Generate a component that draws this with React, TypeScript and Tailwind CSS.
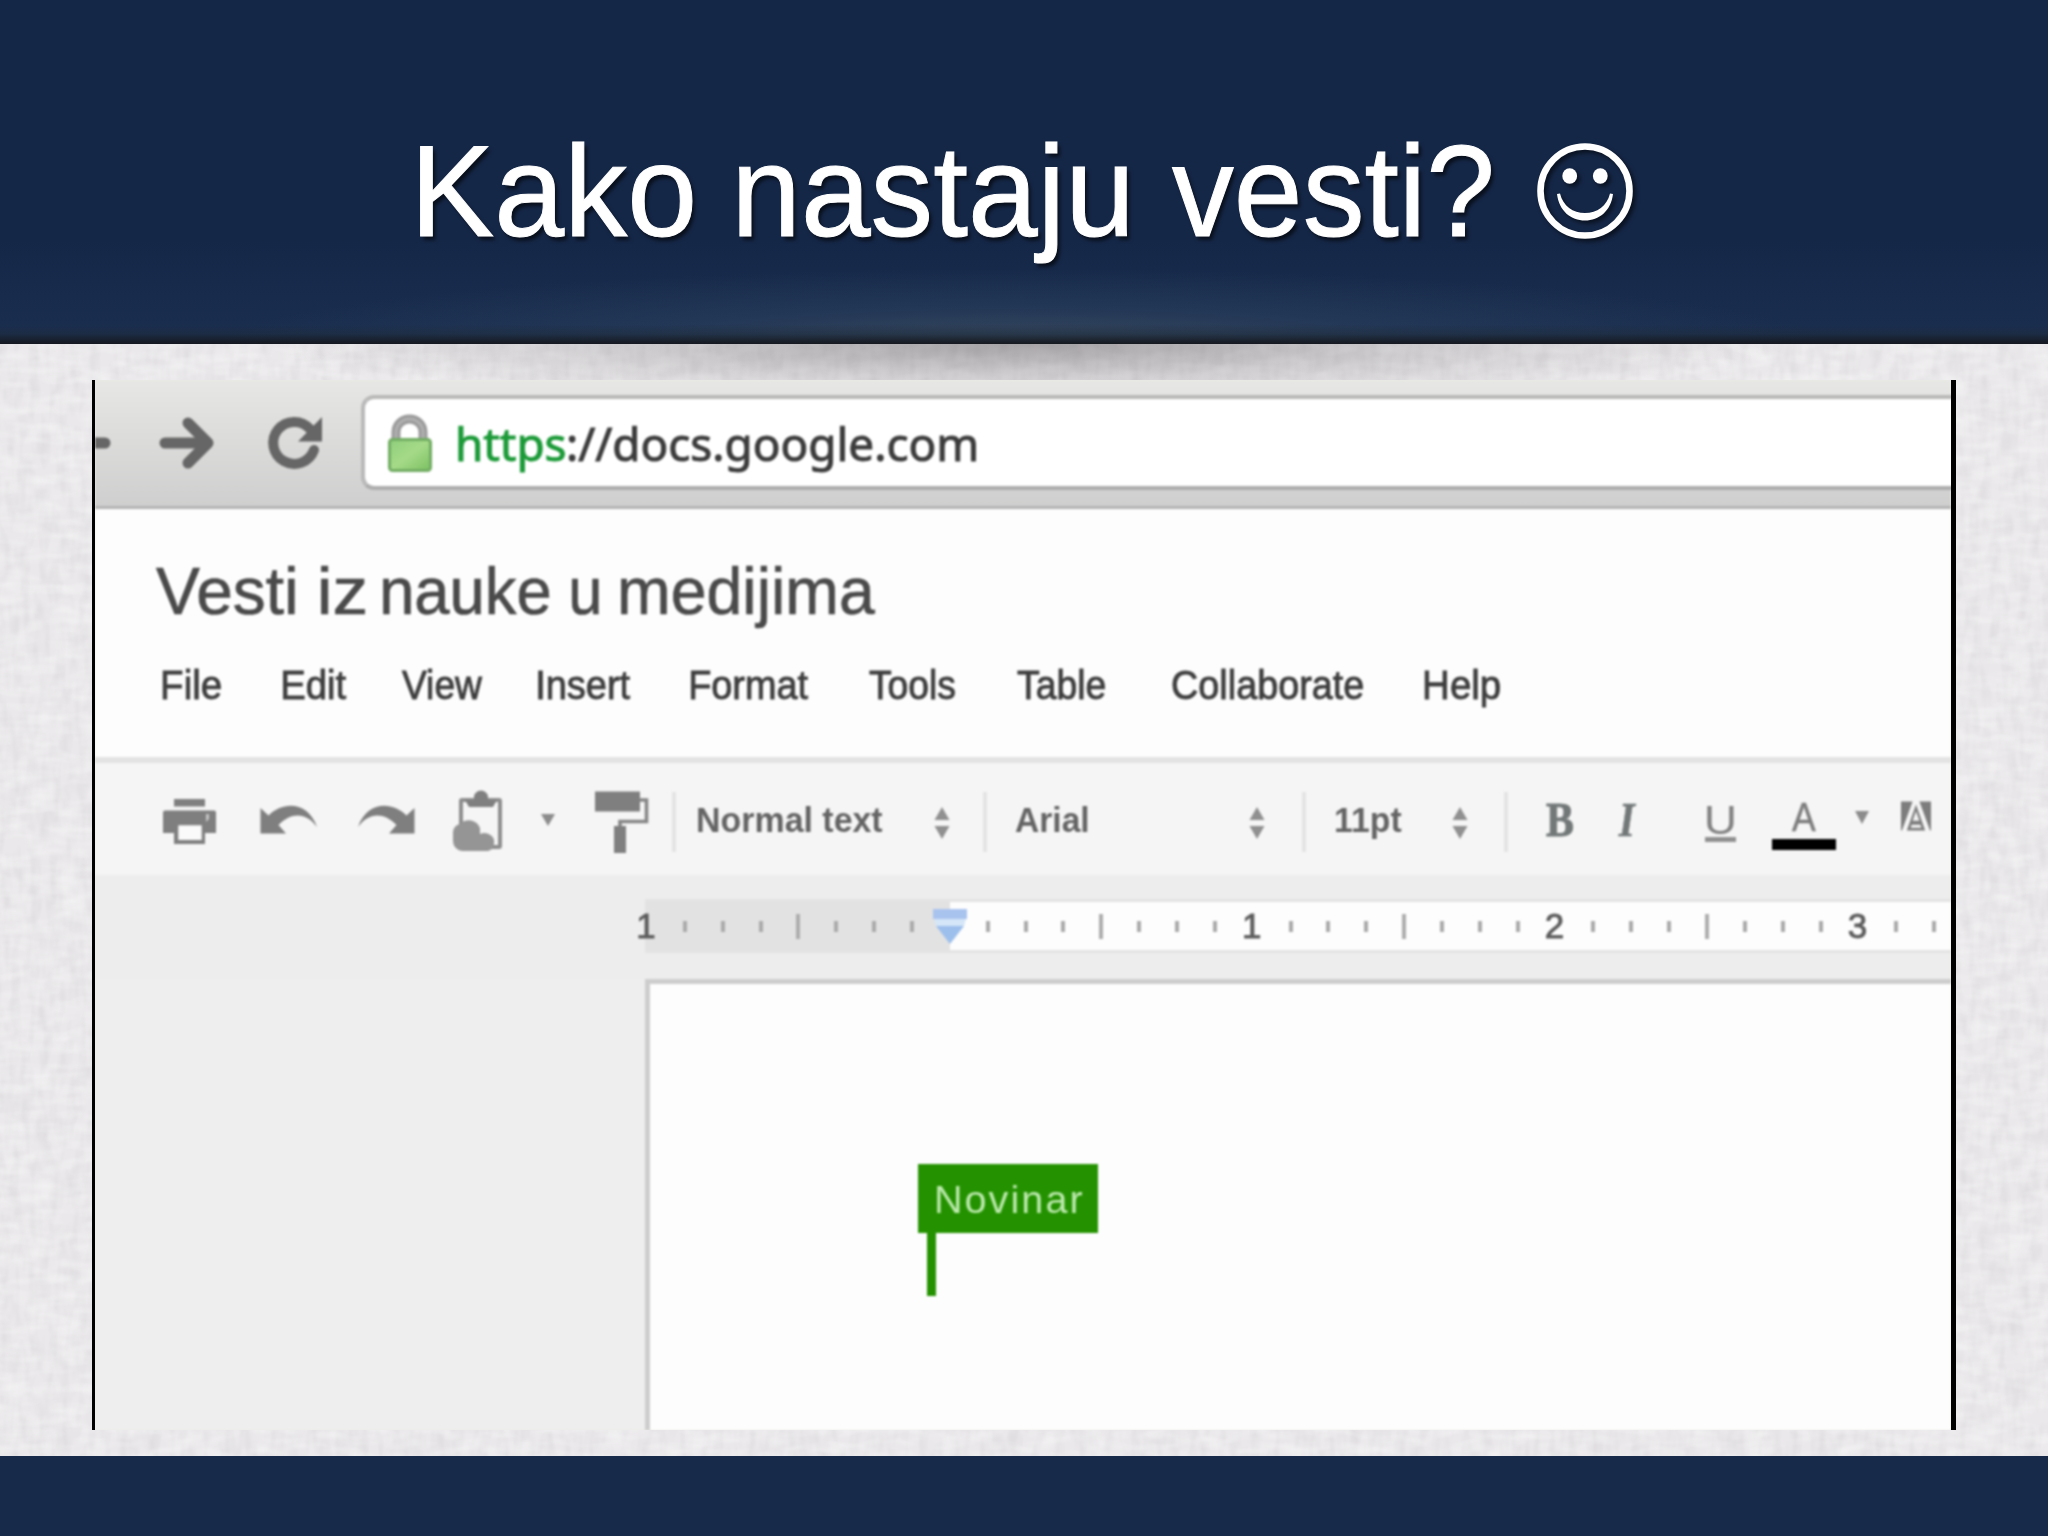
import { useLayoutEffect, useRef } from "react";

const INK = document.createElement("canvas").getContext("2d")!;

/** One run of text whose ink fills exactly `w` pixels, starting at the box's left edge. */
function Fit({ text, w, className = "" }: { text: string; w: number; className?: string }) {
  const ref = useRef<HTMLSpanElement>(null);
  useLayoutEffect(() => {
    const el = ref.current!;
    const cs = getComputedStyle(el);
    INK.font = `${cs.fontStyle} ${cs.fontWeight} ${cs.fontSize} ${cs.fontFamily}`;
    (INK as any).letterSpacing = cs.letterSpacing === "normal" ? "0px" : cs.letterSpacing;
    const m = INK.measureText(text);
    const left = -m.actualBoundingBoxLeft;
    const lsp = parseFloat(cs.letterSpacing) || 0;
    const ink = m.actualBoundingBoxRight + m.actualBoundingBoxLeft - (m.actualBoundingBoxRight > m.width - 0.5 ? lsp : 0);
    const s = w / ink;
    el.style.transform = `translateX(${-left * s}px) scaleX(${s})`;
  }, [text, w]);
  return (
    <span className="block shrink-0 whitespace-pre" style={{ width: w }}>
      <span ref={ref} className={`inline-block origin-left whitespace-pre ${className}`}>{text}</span>
    </span>
  );
}

function Smiley() {
  return (
    <svg className="ml-[46px] mt-[143px] h-24 w-24 shrink-0 overflow-visible drop-shadow-[3px_3px_2px_rgba(0,0,0,0.55)]" viewBox="0 0 96 96">
      <circle cx="48" cy="48" r="44.5" fill="none" stroke="#fff" strokeWidth="6.6" />
      <ellipse cx="32.7" cy="33" rx="7.4" ry="7.8" fill="#fff" />
      <ellipse cx="63.3" cy="33" rx="7.4" ry="7.8" fill="#fff" />
      <path d="M20 51 C22 68 34 77.5 48 77.5 C62 77.5 74 68 76 51 L73 50.5 C70 63 60 70 48 70 C36 70 26 63 23 50.5 Z" fill="#fff" />
    </svg>
  );
}

function BrowserBar() {
  return (
    <div className="flex h-[129px] border-b-[3px] border-[#b4b4b4] bg-gradient-to-b from-[#e7e7e5] to-[#cfcfcf]">
      <svg className="h-[126px] w-[266px] shrink-0" viewBox="95 380 266 126" fill="none" stroke="#666" strokeWidth="11" strokeLinecap="round" strokeLinejoin="round">
        <path d="M90 443H105" />
        <path d="M165 443H206" />
        <path d="M188 423L208 443L188 463" />
        <path d="M314 450A21 21 0 1 1 310 429" strokeWidth="10" />
        <path d="M322 417V441.500H298Z" fill="#666" stroke="none" />
      </svg>
      <div className="mt-[15px] flex h-[95px] w-[1610px] shrink-0 rounded-l-[13px] border-4 border-t-[#b9b9b7] border-l-[#b9b9b9] border-b-[#adadad] bg-white">
        <svg className="ml-[22px] mt-[15px] h-[60px] w-[46px] shrink-0" viewBox="387 413 46 60">
          <defs>
            <linearGradient id="lockBody" x1="0" y1="0" x2="1" y2="1">
              <stop offset="0" stopColor="#8fcf7c" />
              <stop offset=".5" stopColor="#a5da88" />
              <stop offset="1" stopColor="#7cc061" />
            </linearGradient>
          </defs>
          <path d="M396 440V431A13.500 13 0 0 1 423 431V440" fill="none" stroke="#9a9a9a" strokeWidth="9" />
          <path d="M396 440V431A13.500 13 0 0 1 423 431V440" fill="none" stroke="#b0b0b0" strokeWidth="3" />
          <rect x="389.500" y="438.500" width="41" height="31" rx="3" fill="url(#lockBody)" stroke="#72ad63" strokeWidth="3" />
        </svg>
        <div className="mt-[13px] flex font-['Noto_Sans'] text-[45px] leading-[64px]">
          <div className="ml-[25px] flex">
            <Fit text="https" w={107} className="text-[#1c9a38] [-webkit-text-stroke:1px_#1c9a38]" />
            <div className="ml-[4px]"><Fit text="://docs.google.com" w={407} className="text-[#3c3c3c] [-webkit-text-stroke:1px_#3c3c3c]" /></div>
          </div>
        </div>
      </div>
    </div>
  );
}

const TITLE: [string, number, number][] = [
  ["Vesti", 0, 139],
  ["iz", 26, 44],
  ["nauke", 18, 166],
  ["u", 23, 27],
  ["medijima", 22, 254],
];

const MENU: [string, number, number][] = [
  ["File", 0, 58],
  ["Edit", 62, 63],
  ["View", 56, 80],
  ["Insert", 56, 92],
  ["Format", 61, 117],
  ["Tools", 61, 86],
  ["Table", 62, 88],
  ["Collaborate", 68, 190],
  ["Help", 62, 75],
];

function DocHeader() {
  return (
    <div className="h-[248px] bg-[#fdfdfd]">
      <div className="flex pl-[61px] pt-[42px] text-[66px] leading-[80px] text-[#4a4a4a]">
        {TITLE.map(([t, gap, w]) => (
          <div key={t} className="flex">
            <div className="shrink-0" style={{ width: gap }} />
            <Fit text={t} w={w} className="[-webkit-text-stroke:0.7px_#4a4a4a]" />
          </div>
        ))}
      </div>
      <div className="flex pl-[68px] pt-[24px] text-[40px] leading-[60px] text-[#3e3e3e]">
        {MENU.map(([t, gap, w]) => (
          <div key={t} className="flex">
            <div className="shrink-0" style={{ width: gap }} />
            <Fit text={t} w={w} className="[-webkit-text-stroke:0.9px_#3e3e3e]" />
          </div>
        ))}
      </div>
    </div>
  );
}

function Separator() {
  return <div className="mt-[29px] h-[60px] w-1 shrink-0 bg-[#e4e4e4]" />;
}

function Spinner() {
  return (
    <svg className="mt-[44px] h-8 w-4 shrink-0" viewBox="0 0 16 32" fill="#909090">
      <path d="M8 0L15.500 13H.5Z" />
      <path d="M8 32L15.500 19H.5Z" />
    </svg>
  );
}

function ToolIcons() {
  return (
    <svg className="h-[112px] w-[577px] shrink-0" viewBox="95 763 577 112" fill="#7f7f7f">
      {/* print */}
      <rect x="174" y="799" width="31" height="7.500" />
      <path fillRule="evenodd" d="M165 810.500H214Q216 810.500 216 812.500V833H205V844H174V833H163V812.500Q163 810.500 165 810.500ZM178.500 825.500V840H201.500V825.500Z" />
      <rect x="178.500" y="825.500" width="23" height="14.500" fill="#fafafa" />
      <path d="M206 814H209V819L206 822Z" fill="#c4c4c4" />
      {/* undo */}
      <path d="M260.500 808L268.500 815.500C283 801 308 801 317 827C307 813 292 811 278.500 825L286 833.500H260.500Z" />
      {/* redo */}
      <path d="M414.500 808L406.500 815.500C392 801 367 801 358 827C368 813 383 811 396.500 825L389 833.500H414.500Z" />
      {/* clipboard with cloud */}
      <rect x="461" y="800" width="39" height="47" fill="none" stroke="#8e8e8e" strokeWidth="4" rx="1" />
      <path d="M465 800H474V797A6.500 6 0 0 1 488 797V800H497L493 807H469Z" />
      <path d="M462 851A10 10 0 0 1 453 841V832A9 8 0 0 1 460 824A12 12 0 0 1 480 828V834A10 9 0 0 1 494 844A8 8 0 0 1 488 851Z" fill="#959595" />
      {/* dropdown */}
      <path d="M541 814H555L548 826Z" fill="#8c8c8c" />
      {/* paint format */}
      <rect x="595" y="791.500" width="45" height="20" />
      <path d="M640 800H646.500V821.500H620V828" fill="none" stroke="#868686" strokeWidth="3.600" />
      <rect x="614" y="826" width="12" height="27" />
    </svg>
  );
}

function Toolbar() {
  return (
    <div className="flex h-[118px] border-t-[6px] border-[#e3e3e3] bg-[#f5f5f5] text-[35px] leading-[60px] text-[#646464]">
      <ToolIcons />
      <Separator />
      <div className="ml-[22px] mt-[27px]"><Fit text="Normal text" w={185} className="font-bold" /></div>
      <div className="ml-[51px]"><Spinner /></div>
      <div className="ml-[33px]"><Separator /></div>
      <div className="ml-[28px] mt-[27px]"><Fit text="Arial" w={73} className="font-bold" /></div>
      <div className="ml-[161px]"><Spinner /></div>
      <div className="ml-[37px]"><Separator /></div>
      <div className="ml-[30px] mt-[27px]"><Fit text="11pt" w={66} className="font-bold" /></div>
      <div className="ml-[50px]"><Spinner /></div>
      <div className="ml-[36px]"><Separator /></div>
      <div className="ml-[38px] mt-[27px] font-['Liberation_Serif'] text-[48px] font-bold text-[#727777]"><Fit text="B" w={27} className="[-webkit-text-stroke:1px_#727777]" /></div>
      <div className="ml-[45px] mt-[27px] font-['Liberation_Serif'] text-[48px] font-bold italic text-[#727777]"><Fit text="I" w={19} className="[-webkit-text-stroke:0.5px_#727777]" /></div>
      <div className="ml-[68px] mt-[27px] flex w-[31px] flex-col items-center">
        <div className="h-[47px] text-[41px] text-[#828282]"><Fit text="U" w={27} /></div>
        <div className="h-[5px] w-full bg-[#909090]" />
      </div>
      <div className="ml-[36px] mt-[24px] flex w-[64px] flex-col items-center">
        <div className="h-[52px] text-[40px] text-[#7c7c7c]"><Fit text="A" w={24} className="[-webkit-text-stroke:0.5px_#7c7c7c]" /></div>
        <div className="h-[11px] w-full bg-black" />
      </div>
      <svg className="ml-[18px] mt-[48px] h-[14px] w-4 shrink-0" viewBox="0 0 16 14" fill="#8c8c8c"><path d="M1 0H15L8 13Z" /></svg>
      <svg className="ml-[31px] mt-[38px] h-[31px] w-[30px] shrink-0" viewBox="0 0 31 31" fill="#7d7d7d">
        <path d="M0 0H12L1 30H0ZM19 0H31V30H30Z" />
        <path fillRule="evenodd" d="M15.500 3L25 30H6ZM15.500 10L12 20H19ZM11 24L10 27H21L20 24Z" />
      </svg>
    </div>
  );
}

const CELLS = Array.from({ length: 35 }, (_, i) => i);

function Ruler() {
  return (
    <div className="h-[104px] bg-[#ededed] pt-[24px]">
      <div className="ml-[550px] flex h-[54px] border-y-[3px] border-[#e3e3e3] bg-[linear-gradient(to_right,#e2e2e2_305px,#fdfdfd_305px)]">
        <div className="-ml-[17px] flex items-center">
          {CELLS.map((i) => (
            <div key={i} className="flex h-[48px] w-[37.86px] shrink-0 items-center justify-center">
              {i === 8 ? (
                <svg className="h-9 w-9 shrink-0" viewBox="0 0 36 36">
                  <path d="M1 1H35V11H1Z" fill="#a9c3ef" />
                  <path d="M2 11H34L32 18H4Z" fill="#d5e6f8" />
                  <path d="M4 18H32L18 36Z" fill="#9dbfec" />
                </svg>
              ) : i % 8 === 0 ? (
                <span className="pr-0.5 text-[35px] leading-[48px] text-[#5c5c5c] [-webkit-text-stroke:0.9px_#5c5c5c]">{i === 0 ? 1 : i / 8 - 1}</span>
              ) : (
                <div className={i % 4 === 0 ? "h-[25px] w-1 bg-[#adadad]" : "h-[11px] w-1 bg-[#aaaaaa]"} />
              )}
            </div>
          ))}
        </div>
      </div>
    </div>
  );
}

function Page() {
  return (
    <div className="flex h-[451px] bg-[#eeeeee]">
      <div className="ml-[550px] flex-1 border-l-[5px] border-t-[5px] border-[#cdcdcd] bg-[#fdfdfd]">
        <div className="ml-[268px] mt-[180px] h-[69px] w-[180px] bg-[#249200] pl-[19px] pt-[6px] text-[38px] leading-[60px] text-[#bdeaae]">
          <Fit text="Novinar" w={146} className="tracking-[2px]" />
        </div>
        <div className="ml-[277px] h-[63px] w-[9px] bg-[#249200]" />
      </div>
    </div>
  );
}

function Fabric() {
  return (
    <svg className="absolute inset-0 h-full w-full" preserveAspectRatio="none">
      <filter id="weaveV" x="0" y="0" width="100%" height="100%">
        <feTurbulence type="fractalNoise" baseFrequency="0.1 0.035" numOctaves="2" seed="4" />
        <feColorMatrix values="0 0 0 0 .5  0 0 0 0 .49  0 0 0 0 .52  .45 0 0 0 -.17" />
      </filter>
      <filter id="weaveH" x="0" y="0" width="100%" height="100%">
        <feTurbulence type="fractalNoise" baseFrequency="0.035 0.1" numOctaves="2" seed="9" />
        <feColorMatrix values="0 0 0 0 1  0 0 0 0 1  0 0 0 0 1  .8 0 0 0 -.3" />
      </filter>
      <rect width="100%" height="100%" filter="url(#weaveV)" />
      <rect width="100%" height="100%" filter="url(#weaveH)" />
    </svg>
  );
}

export default function App() {
  return (
    <div className="flex h-[1536px] w-[2048px] flex-col overflow-hidden bg-[#172a4a] font-['Liberation_Sans',sans-serif]">
      <header className="relative flex h-[344px] shrink-0 bg-[#152747]">
        <div className="absolute inset-0 bg-[linear-gradient(to_bottom,transparent_240px,rgba(40,66,105,0.25)_335px)]" />
        <div className="absolute inset-0 bg-[radial-gradient(ellipse_800px_75px_at_50%_100%,rgba(70,85,100,0.7),rgba(50,72,100,0.38)_50%,transparent)]" />
        <div className="absolute inset-x-0 bottom-0 h-[20px] bg-gradient-to-b from-transparent via-[#1d2a38]/50 to-[#15181f]" />
        <h1 className="relative ml-[420px] mt-[111px] flex text-[130px] leading-[160px] text-white [text-shadow:3px_4px_4px_rgba(0,0,0,0.6)]">
          <Fit text="Kako" w={272} className="[-webkit-text-stroke:1px_white]" />
          <span className="w-[47px] shrink-0" />
          <Fit text="nastaju" w={388} className="[-webkit-text-stroke:1px_white]" />
          <span className="w-[45px] shrink-0" />
          <Fit text="vesti?" w={319} className="[-webkit-text-stroke:1px_white]" />
        </h1>
        <div className="relative flex"><Smiley /></div>
      </header>
      <main className="relative h-[1112px] shrink-0 bg-[#eae8ea]">
        <Fabric />
        <div className="absolute inset-x-0 top-0 h-20 bg-[radial-gradient(ellipse_760px_60px_at_50%_0%,rgba(70,65,70,0.42),rgba(90,85,90,0.18)_55%,transparent)]" />
        <div className="relative ml-[92px] mt-[36px] flex h-[1050px] w-[1864px] border-l-[3px] border-r-[5px] border-black">
          <div className="w-full overflow-hidden bg-[#e9e9e8]">
            <div className="h-full w-full blur-[1px]">
              <BrowserBar />
              <DocHeader />
              <Toolbar />
              <Ruler />
              <Page />
            </div>
          </div>
        </div>
      </main>
    </div>
  );
}
